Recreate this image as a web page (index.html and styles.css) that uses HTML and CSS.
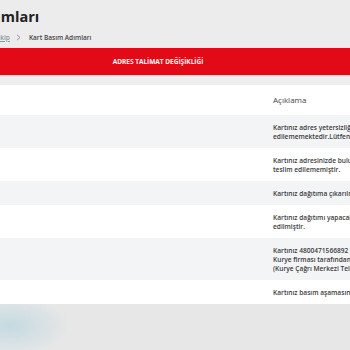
FILE: index.html
```html
<!DOCTYPE html>
<html lang="tr">
<head>
  <meta charset="UTF-8">
  <meta name="viewport" content="width=device-width, initial-scale=1.0">
  <title>Kart Basım Adımları</title>
  <link rel="stylesheet" href="styles.css">
</head>
<body>
  <div class="page-head">
    <h1 class="page-title">Kart Basım Adımları</h1>
    <div class="crumbs">
      <a href="#">Kart takip</a>
      <span class="chev"><svg width="5" height="7" viewBox="0 0 5 7"><path d="M1 0.8 L4 3.5 L1 6.2" fill="none" stroke="#8a8a8a" stroke-width="0.9"/></svg></span>
      <span class="current">Kart Basım Adımları</span>
    </div>
  </div>

  <div class="tab-bar">ADRES TALİMAT DEĞİŞİKLİĞİ</div>
  <div class="gap"></div>

  <div class="steps">
    <div class="row head">
      <div class="cell"></div>
      <div class="cell">Açıklama</div>
    </div>
    <div class="row alt">
      <div class="cell"></div>
      <div class="cell">Kartınız adres yetersizliği nedeniyle teslim<br>edilememektedir.Lütfen adres bilgilerinizi güncelleyiniz.</div>
    </div>
    <div class="row">
      <div class="cell"></div>
      <div class="cell">Kartınız adresinizde bulunamadığınız için<br>teslim edilememiştir.</div>
    </div>
    <div class="row alt">
      <div class="cell"></div>
      <div class="cell">Kartınız dağıtıma çıkarılmıştır.</div>
    </div>
    <div class="row">
      <div class="cell"></div>
      <div class="cell">Kartınız dağıtımı yapacak kurye firmasına teslim<br>edilmiştir.</div>
    </div>
    <div class="row alt">
      <div class="cell"></div>
      <div class="cell">Kartınız 4800471566892 gönderi numarası ile<br>Kurye firması tarafından teslim alınmıştır.<br>(Kurye Çağrı Merkezi Tel: 444 0 555)</div>
    </div>
    <div class="row">
      <div class="cell"></div>
      <div class="cell">Kartınız basım aşamasındadır.</div>
    </div>
  </div>

  <div class="page-foot"></div>
</body>
</html>
```

FILE: styles.css
```css
* { box-sizing: border-box; }
html, body { height: 100%; }
body {
  margin: 0;
  overflow: hidden;
  background: #ececec;
  color: #333;
  font-family: "Open Sans", "Liberation Sans", sans-serif;
  display: flex;
  flex-direction: column;
}
.page-head {
  padding-top: 8px;
  height: 48px;
}
.page-title {
  margin: 0 0 0 -106px;
  font-size: 14.5px;
  font-weight: 700;
  line-height: 18px;
  color: #222;
  white-space: nowrap;
}
.crumbs {
  margin: 7px 0 0 -21px;
  display: flex;
  align-items: center;
  gap: 5px;
  font-size: 6.5px;
  font-weight: 600;
  white-space: nowrap;
}
.crumbs a { color: #8696a4; text-decoration: underline; }
.crumbs .chev { display: flex; margin: 0 3px 0 1px; }
.crumbs .current { color: #444; }
.tab-bar {
  height: 27px;
  background: #e30a17;
  color: #fff;
  font-size: 6.5px;
  font-weight: 700;
  display: flex;
  align-items: center;
  justify-content: center;
  padding-right: 34px;
}
.gap {
  height: 10px;
  background: #efefef;
}
.steps { background: #fff; }
.row {
  display: grid;
  grid-template-columns: 273px 1fr;
}
.row .cell {
  padding: 8px 0 7px;
  font-size: 6.6px;
  font-weight: 600;
  line-height: 9px;
  white-space: nowrap;
  overflow: hidden;
  color: #3a3a3a;
}
.row.alt { background: #f3f4f6; }
.row.head .cell {
  padding: 10px 0 10px;
  font-size: 8px;
  font-weight: 400;
  line-height: 10px;
  color: #444;
}
.page-foot {
  flex: 1;
  background:
    radial-gradient(ellipse 60px 30px at 10px 22px, rgba(160, 205, 220, 0.5), rgba(160, 205, 220, 0) 100%),
    #e7e7e7;
}
```
